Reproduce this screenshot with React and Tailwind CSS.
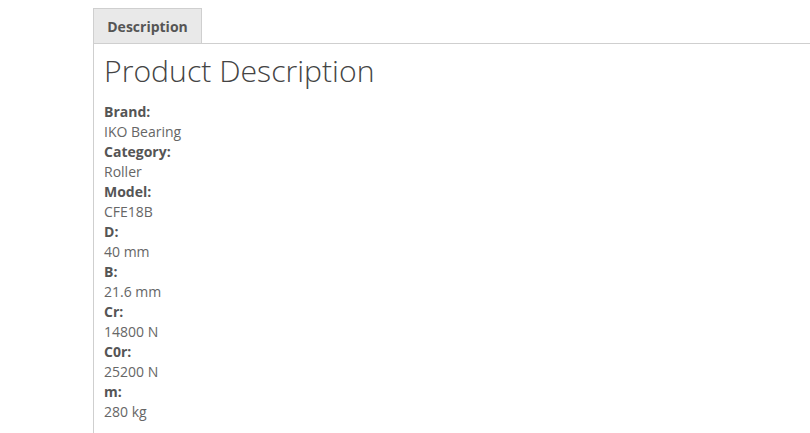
export default function App() {
  const specs = [
    ["Brand", "IKO Bearing"],
    ["Category", "Roller"],
    ["Model", "CFE18B"],
    ["D", "40 mm"],
    ["B", "21.6 mm"],
    ["Cr", "14800 N"],
    ["C0r", "25200 N"],
    ["m", "280 kg"],
  ];

  return (
    <div className="h-[433px] overflow-hidden bg-white pl-[93px] pt-[8px] font-['Open_Sans',sans-serif]">
      <div className="flex">
        <div className="h-[35px] w-[109px] border border-b-0 border-[#cfcfcf] bg-[#e9e9e9] flex items-center justify-center text-[14px] font-bold text-[#555]">
          Description
        </div>
      </div>
      <div className="border-t border-l border-[#cfcfcf] pl-[10px] pt-[7px] h-full">
        <h2 className="text-[30.2px] font-light leading-[40px] text-[#444] mb-[11px]">
          Product Description
        </h2>
        <div className="text-[14px] leading-[20px]">
          {specs.map(([label, value]) => (
            <div key={label}>
              <div className="font-bold text-[#555]">{label}:</div>
              <div className="text-[#666]">{value}</div>
            </div>
          ))}
        </div>
      </div>
    </div>
  );
}
